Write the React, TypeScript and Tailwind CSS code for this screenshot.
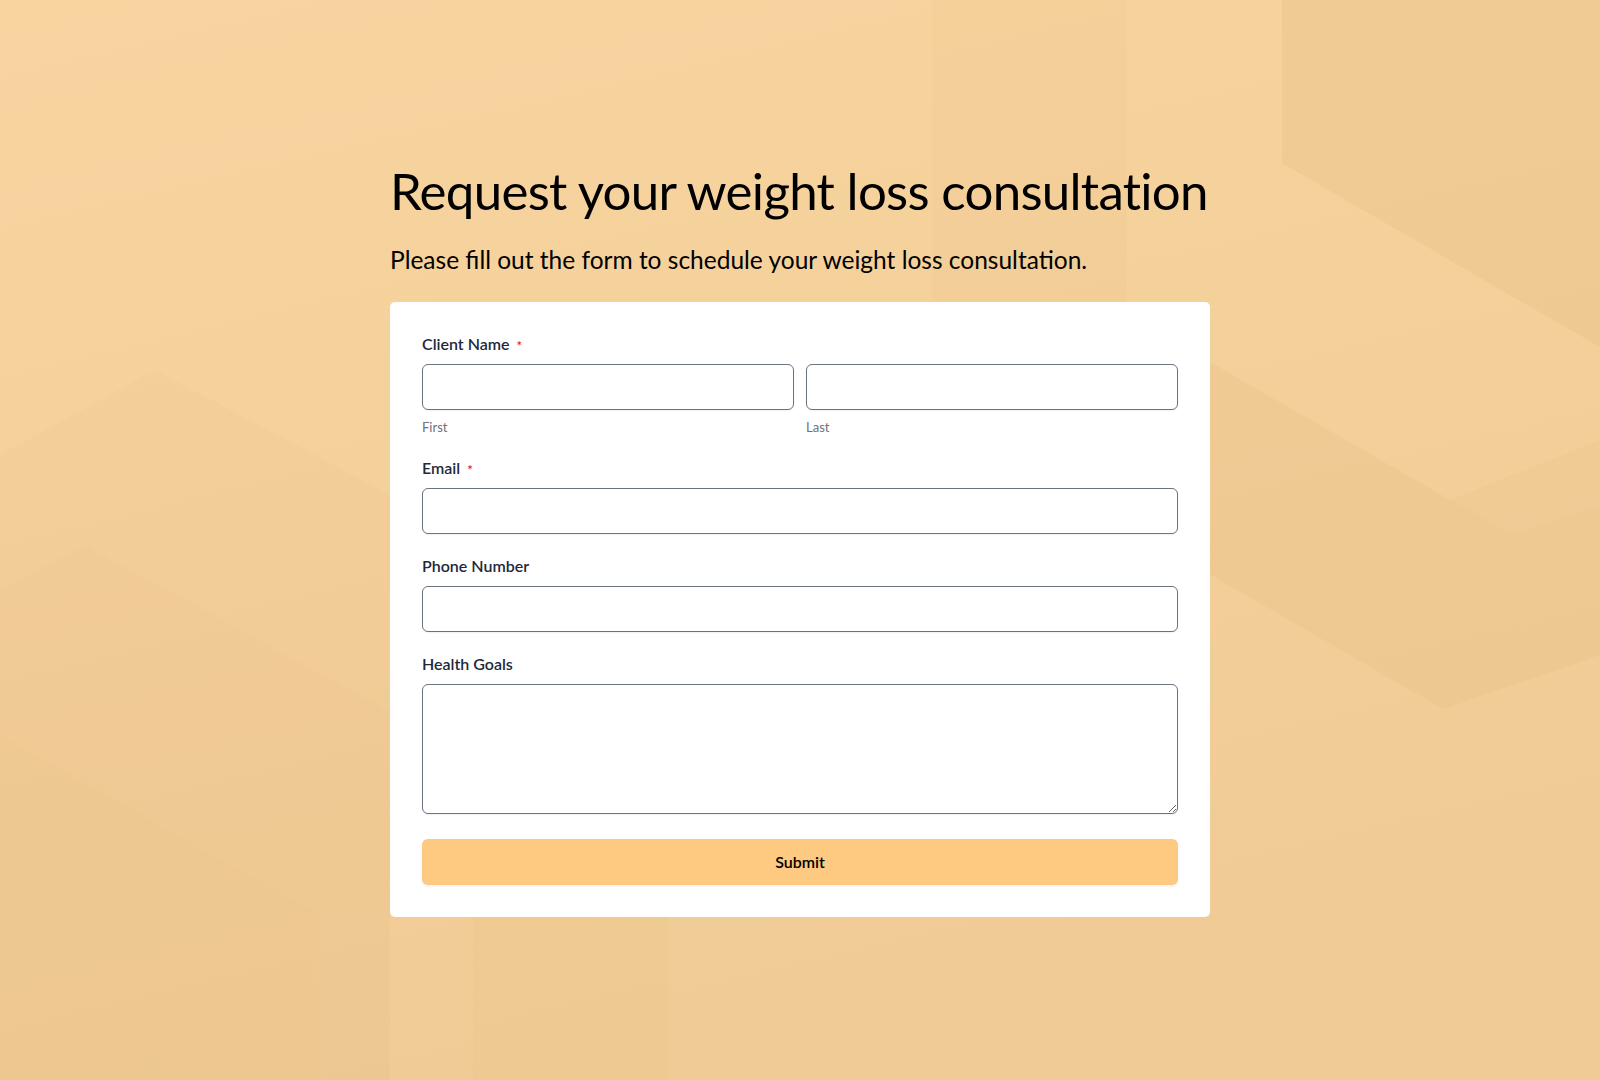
import React from "react";

function Background() {
  return (
    <svg
      className="absolute inset-0 h-full w-full"
      viewBox="0 0 1600 1080"
      preserveAspectRatio="none"
      aria-hidden="true"
    >
      <defs>
        <linearGradient id="bg" x1="0" y1="0" x2="0.35" y2="1">
          <stop offset="0" stopColor="#f8d5a0" />
          <stop offset="1" stopColor="#f0cb95" />
        </linearGradient>
      </defs>
      <rect x="0" y="0" width="1600" height="1080" fill="url(#bg)" />
      <polygon points="932,0 1127,0 1127,302 932,302" fill="#e6bd84" opacity="0.12" />
      <polygon points="1282,0 1600,0 1600,347 1282,163" fill="#e3b97f" opacity="0.28" />
      <polygon points="1210,362 1450,500 1513,535 1600,507 1600,655 1443,709 1210,574" fill="#e3b97f" opacity="0.2" />
      <polygon points="1450,500 1513,535 1600,507 1600,440" fill="#e3b97f" opacity="0.15" />
      <polygon points="0,455 155,370 390,495 390,712 85,545 0,590" fill="#e3b97f" opacity="0.1" />
      <polygon points="0,590 85,545 390,712 390,1080 318,1080 318,915 0,735" fill="#e3b97f" opacity="0.18" />
      <polygon points="0,735 318,915 318,1080 0,1080" fill="#e3b97f" opacity="0.28" />
      <polygon points="473,917 668,917 668,1080 473,1080" fill="#e3b97f" opacity="0.1" />
    </svg>
  );
}

function Label({ text, required }: { text: string; required?: boolean }) {
  return (
    <div className="flex items-center text-[16px] leading-[24px] font-semibold text-[#1e293b]">
      <span>{text}</span>
      {required && (
        <span className="ml-[7px] translate-y-[2px] text-[13px] leading-[13px] text-[#dc2626]">*</span>
      )}
    </div>
  );
}

const inputCls =
  "block w-full h-[46px] rounded-[6px] border border-[#6b7280] bg-white shadow-[0_1px_2px_rgba(0,0,0,0.06)] outline-none";

export default function App() {
  return (
    <div
      className="relative min-h-screen w-full overflow-hidden"
      style={{ fontFamily: "Lato, 'Noto Sans', sans-serif" }}
    >
      <Background />
      <div className="relative mx-auto w-[820px] pt-[159px] pb-[100px]">
        <h1 className="whitespace-nowrap text-[51px] leading-[64px] tracking-[-0.7px] font-normal text-black">
          Request your weight loss consultation
        </h1>
        <p className="mt-[21px] whitespace-nowrap text-[24.5px] leading-[32px] text-black">
          Please fill out the form to schedule your weight loss consultation.
        </p>
        <div className="mt-[26px] rounded-[5px] bg-white px-[32px] pt-[30px] pb-[32px]">
          <Label text="Client Name" required />
          <div className="mt-[8px] grid grid-cols-2 gap-[12px]">
            <div>
              <input className={inputCls} />
              <div className="mt-[7px] text-[13px] leading-[20px] text-[#6b7280]">First</div>
            </div>
            <div>
              <input className={inputCls} />
              <div className="mt-[7px] text-[13px] leading-[20px] text-[#6b7280]">Last</div>
            </div>
          </div>
          <div className="mt-[19px]">
            <Label text="Email" required />
            <input className={"mt-[8px] " + inputCls} />
          </div>
          <div className="mt-[20px]">
            <Label text="Phone Number" />
            <input className={"mt-[8px] " + inputCls} />
          </div>
          <div className="mt-[20px]">
            <Label text="Health Goals" />
            <textarea className="mt-[8px] block h-[130px] w-full rounded-[6px] border border-[#6b7280] bg-white shadow-[0_1px_2px_rgba(0,0,0,0.06)] outline-none" />
          </div>
          <button className="mt-[25px] flex h-[46px] w-full items-center justify-center rounded-[6px] bg-[#fec980] text-[16px] font-semibold text-black shadow-[0_1px_3px_rgba(0,0,0,0.08)]">
            Submit
          </button>
        </div>
      </div>
    </div>
  );
}
